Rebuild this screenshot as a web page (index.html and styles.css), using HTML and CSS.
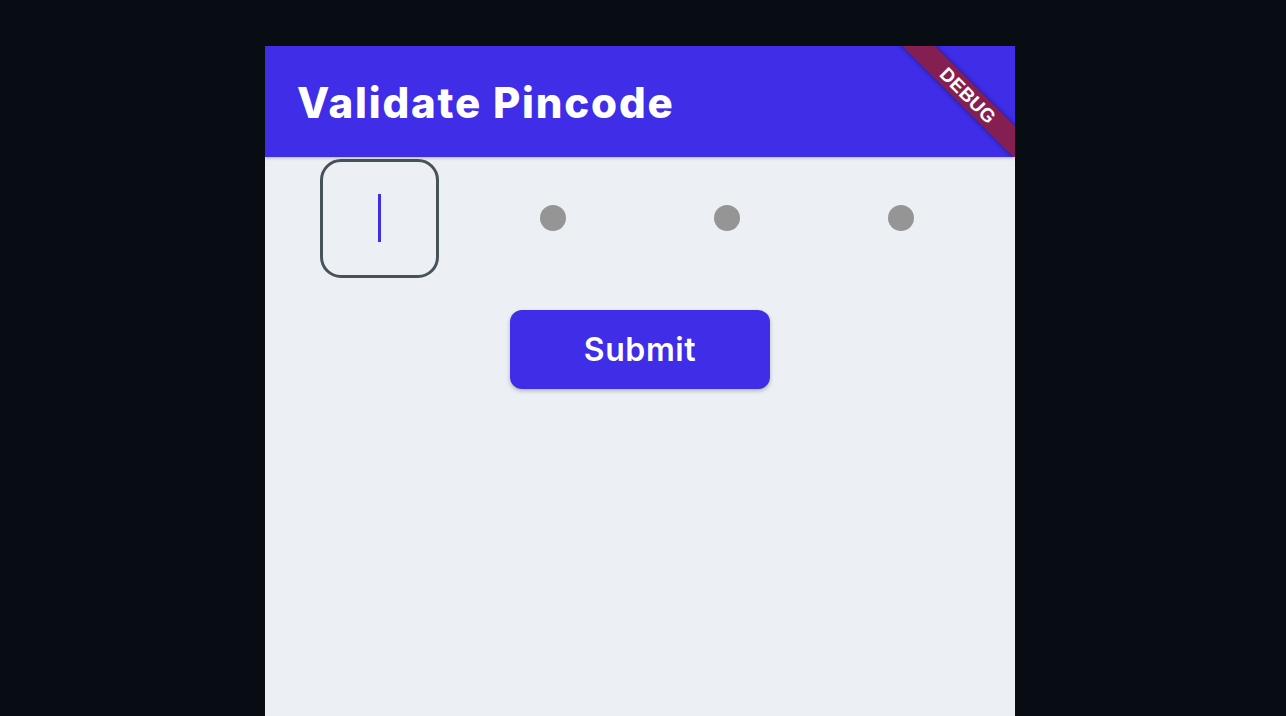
FILE: index.html
```html
<!DOCTYPE html>
<html>
<head>
<meta charset="utf-8">
<link rel="stylesheet" href="styles.css">
</head>
<body>
<div class="frame">
  <header class="appbar">
    <h1 class="title">Validate Pincode</h1>
    <div class="banner"><span>DEBUG</span></div>
  </header>
  <main class="content">
    <div class="pin-row">
      <div class="cell"><div class="box"><div class="cursor"></div></div></div>
      <div class="cell"><div class="dot"></div></div>
      <div class="cell"><div class="dot"></div></div>
      <div class="cell"><div class="dot"></div></div>
    </div>
    <button class="submit">Submit</button>
  </main>
</div>
</body>
</html>
```
FILE: styles.css
```css
html, body {
  margin: 0;
  padding: 0;
  background: #070d12;
  height: 100%;
  overflow: hidden;
}
.frame {
  width: 750px;
  height: 670px;
  margin: 46px 0 0 265px;
  background: #ecf0f5;
  display: flex;
  flex-direction: column;
  position: relative;
  overflow: hidden;
}
.appbar {
  height: 111px;
  flex: none;
  background: #3f2de8;
  display: flex;
  align-items: center;
  padding-left: 32px;
  box-shadow: 0 1px 3px rgba(0,0,0,0.25);
  position: relative;
  overflow: hidden;
  z-index: 1;
}
.title {
  margin: 0;
  color: #ffffff;
  font-family: Inter, "Noto Sans", sans-serif;
  font-weight: 800;
  font-size: 42px;
  letter-spacing: 1.8px;
  line-height: 1;
  padding-top: 2px;
}
.banner {
  position: absolute;
  left: 603px;
  top: 38px;
  width: 200px;
  height: 23px;
  background: #851f52;
  transform: rotate(45deg);
  box-shadow: 0 0 5px rgba(0,0,0,0.45);
  display: flex;
  align-items: center;
  justify-content: center;
}
.banner span {
  color: #fff;
  font-family: "Liberation Sans", Arial, sans-serif;
  font-weight: 700;
  font-size: 19px;
  line-height: 1;
  letter-spacing: 0.3px;
}
.content {
  flex: 1;
  display: flex;
  flex-direction: column;
  align-items: center;
}
.pin-row {
  display: flex;
  margin-top: 2px;
  padding-left: 27px;
  padding-right: 27px;
  box-sizing: border-box;
  width: 750px;
}
.cell {
  width: 174px;
  height: 118px;
  display: flex;
  align-items: center;
  justify-content: center;
}
.box {
  width: 119px;
  height: 119px;
  box-sizing: border-box;
  border: 3.5px solid #48525b;
  border-radius: 21px;
  display: flex;
  align-items: center;
  justify-content: center;
}
.cursor {
  width: 3px;
  height: 48px;
  background: #3f2de8;
}
.dot {
  width: 26px;
  height: 26px;
  border-radius: 50%;
  background: #959595;
}
.submit {
  margin-top: 33px;
  width: 260px;
  height: 79px;
  border: none;
  border-radius: 12px;
  background: #3f2de8;
  color: #fff;
  font-family: Inter, "Noto Sans", sans-serif;
  font-weight: 600;
  font-size: 32px;
  letter-spacing: 0.6px;
  box-shadow: 0 2px 4px rgba(0,0,0,0.25);
  padding: 0;
}
```
